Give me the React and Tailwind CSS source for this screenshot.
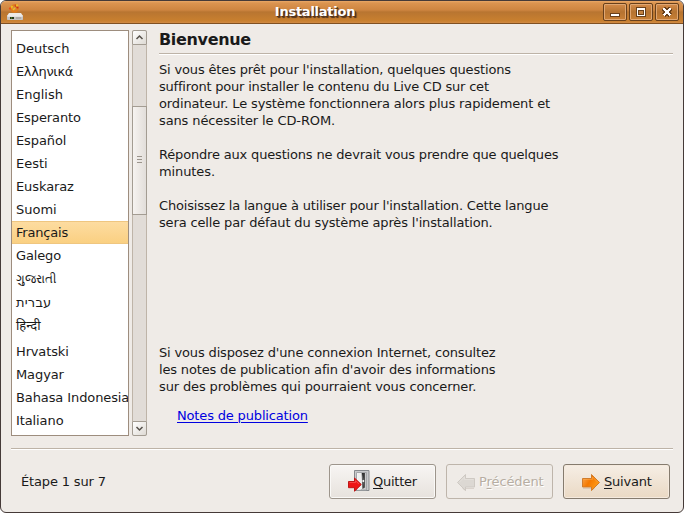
import React from "react";

const languages = [
  { name: "Deutsch" },
  { name: "Ελληνικά", text: "tracking-[-0.35px]" },
  { name: "English" },
  { name: "Esperanto", text: "tracking-[-0.1px]" },
  { name: "Español", text: "tracking-[-0.1px]" },
  { name: "Eesti" },
  { name: "Euskaraz", text: "tracking-[-0.1px]" },
  { name: "Suomi" },
  { name: "Français", selected: true, text: "tracking-[-0.2px]" },
  { name: "Galego", text: "tracking-[-0.15px]" },
  { name: "ગુજરાતી", height: "h-6", text: "text-[12px]" },
  { name: "עברית", text: "tracking-[0.2px]" },
  { name: "हिन्दी", height: "h-[26px]", text: "-translate-y-0.5" },
  { name: "Hrvatski", text: "tracking-[-0.15px]" },
  { name: "Magyar", text: "tracking-[-0.1px]" },
  { name: "Bahasa Indonesia", text: "tracking-[-0.1px]" },
  { name: "Italiano", text: "tracking-[-0.1px]" },
];

const lines = {
  intro: [
    ["Si vous êtes prêt pour l'installation, quelques questions", "tracking-[-0.158px]"],
    ["suffiront pour installer le contenu du Live CD sur cet", "tracking-[-0.2px]"],
    ["ordinateur. Le système fonctionnera alors plus rapidement et", "tracking-[-0.135px]"],
    ["sans nécessiter le CD-ROM.", "tracking-[-0.12px]"],
  ],
  questions: [
    ["Répondre aux questions ne devrait vous prendre que quelques", "tracking-[-0.175px]"],
    ["minutes.", "tracking-[-0.1px]"],
  ],
  language: [
    ["Choisissez la langue à utiliser pour l'installation. Cette langue", "tracking-[-0.185px]"],
    ["sera celle par défaut du système après l'installation.", "tracking-[-0.15px]"],
  ],
  network: [
    ["Si vous disposez d'une connexion Internet, consultez", "tracking-[-0.155px]"],
    ["les notes de publication afin d'avoir des informations", "tracking-[-0.165px]"],
    ["sur des problèmes qui pourraient vous concerner.", "tracking-[-0.13px]"],
  ],
};

function Paragraph({ items, className }) {
  return (
    <p className={className}>
      {items.map(([text, tracking]) => (
        <span key={text} className={`block ${tracking}`}>{text}</span>
      ))}
    </p>
  );
}

function DiskIcon() {
  return (
    <svg width="16" height="19" viewBox="0 0 16 19" className="block">
      <circle cx="7.500" cy="6.500" r="3.200" fill="none" stroke="#e07c1c" strokeWidth="2" />
      <path d="M4.300 7A3.300 3.300 0 0 1 5.500 4" fill="none" stroke="#eec522" strokeWidth="2" />
      <path d="M7.800 3.300a3.300 3.300 0 0 1 2.900 3" fill="none" stroke="#d03010" strokeWidth="1.800" />
      <path d="M6 8l2-2" stroke="#f0c020" strokeWidth="1.500" />
      <circle cx="3.200" cy="6.500" r="1.200" fill="#e8501c" />
      <circle cx="10" cy="3.500" r="1.200" fill="#eebc28" />
      <path d="M2 11h12l2 3H0z" fill="#eceae7" />
      <path d="M0 13.500h16v3.800q0 .7-.7.7H.7Q0 18 0 17.300z" fill="#c5c2bf" />
      <path d="M.5 14h15" stroke="#fff" />
      <path d="M3 15h4v2H3z" fill="#25351b" />
      <path d="M4 16h1" stroke="#60b020" />
      <path d="M9 16h5" stroke="#989592" />
    </svg>
  );
}

function WindowButton({ children }) {
  return (
    <div className="h-[18px] w-6 rounded-[2px] border border-[#69401b] bg-linear-to-b from-[#d58c4a] via-[#b57331] to-[#c98036] shadow-[inset_0_0_0_1px_#e0a772]">
      <svg width="22" height="16" viewBox="0 0 22 16" className="block" shapeRendering="crispEdges">
        {children}
      </svg>
    </div>
  );
}

function QuitIcon() {
  return (
    <svg width="23" height="22" viewBox="0 0 23 22" className="block">
      <defs>
        <linearGradient id="doorway" x1="0" x2="1" y1="0" y2=".3">
          <stop offset="0" stopColor="#111" />
          <stop offset="1" stopColor="#555" />
        </linearGradient>
        <linearGradient id="panel" x1="0" x2="1">
          <stop offset="0" stopColor="#fff" />
          <stop offset="1" stopColor="#c2c3c6" />
        </linearGradient>
      </defs>
      <path d="M7.500 .5h14.500v20h-14.500z" fill="#c9cacc" stroke="#85888c" />
      <path d="M9.500 2.500h10V20h-10z" fill="url(#panel)" stroke="#a5a7aa" />
      <path d="M14.500 3H18v14.500l-3.500 2z" fill="url(#doorway)" />
      <path d="M10.500 3h4l1 16-5 1z" fill="#efefef" />
      <path d="M15 3l2 8-1.500 8z" fill="#707274" />
      <circle cx="16.300" cy="11" r="1" fill="#fff" />
      <path d="M1.500 11.500h6V8L14.300 14.500L7.500 21.200v-3.500h-6z" fill="#ee1616" stroke="#bd1717" strokeLinejoin="round" />
      <path d="M2.500 12.500h6v-1.800l3.500 3.300" fill="none" stroke="#ff6868" opacity=".6" />
    </svg>
  );
}

function ArrowIcon({ back }) {
  const fill = back ? "#dcd8d3" : "url(#orange)";
  return (
    <svg width="20" height="22" viewBox="0 0 20 22" className="block">
      <defs>
        <linearGradient id="orange" x1="0" x2="1" y1="0" y2=".6">
          <stop offset="0" stopColor="#f9aa55" />
          <stop offset=".5" stopColor="#f57900" />
          <stop offset="1" stopColor="#ff9c18" />
        </linearGradient>
      </defs>
      <g transform={back ? "matrix(-1 0 0 1 19 3.500)" : "translate(0 3.500)"}>
        <path d="M1 15h8.500v2l3-2" fill="none" stroke="#786857" opacity=".18" />
        <path d="M.5 5H9.500V1L17.500 9L9.500 17V13.500H.5Z" fill={fill} stroke={back ? "#cec9c3" : "#d07c2c"} strokeLinejoin="round" />
        <path d="M1.500 6H10.500V3.500L15.500 8.500" fill="none" stroke={back ? "#eeeae6" : "#ffb765"} opacity=".4" />
      </g>
    </svg>
  );
}

function ScrollButton({ down }) {
  return (
    <div className={`flex h-[15px] w-[15px] items-center justify-center border border-[#a39c92] bg-linear-to-br from-white to-[#dedad4] ${down ? "rounded-b-[2px]" : "rounded-t-[2px]"}`}>
      <svg width="9" height="7" viewBox="0 0 9 7" className="block">
        <path d={down ? "M1.500 2L4.500 5L7.500 2" : "M1.500 5L4.500 2L7.500 5"} fill="none" stroke="#56514b" strokeWidth="1.500" />
      </svg>
    </div>
  );
}

function Rule() {
  return <div className="h-0.5 border-t border-[#bdb3a7] bg-white" />;
}

export default function App() {
  return (
    <div className="h-[513px] w-[684px] overflow-hidden bg-white font-['DejaVu_Sans','Noto_Sans',sans-serif] text-[13px] leading-[17px] text-[#1a1a1a]">
      <div className="flex h-full flex-col overflow-hidden rounded-t-[6px] rounded-b-[6px] border border-[#453a38] bg-[#efebe7]">
        <header className="flex h-[23px] shrink-0 items-start border-b border-[#805021] bg-[linear-gradient(to_bottom,#e9a867_0,#db9450_2px,#ce8540_9px,#b87531_11px,#c9802f_20px,#d08a45_22px)]">
          <div className="ml-1.5 w-[82px] pt-px"><DiskIcon /></div>
          <h1 className="flex-1 pt-0.5 pr-[62px] text-center text-[13px] font-bold tracking-[-0.25px] text-white [text-shadow:1px_1px_0_#50331c,2px_2px_1px_#50331c]">Installation</h1>
          <div className="mr-1 flex gap-0.5 pt-0.5">
            <WindowButton><path d="M6 9h10v4H6z" fill="#69401b" /><path d="M7 10h8v2H7z" fill="#fff" /></WindowButton>
            <WindowButton><path d="M6 3h10v10H6z" fill="#69401b" /><path d="M7 4h8v8H7z" fill="#fff" /><path d="M8 6h6v5H8z" fill="#69401b" /><path d="M9 7h4v3H9z" fill="#c08040" /></WindowButton>
            <WindowButton><path d="M7.500 4.500l7 7M14.500 4.500l-7 7" stroke="#69401b" strokeWidth="5" /><path d="M7.500 4.500l7 7M14.500 4.500l-7 7" stroke="#fff" strokeWidth="2.800" /></WindowButton>
          </div>
        </header>

        <main className="mx-[10px] mt-1.5 flex h-[406px] shrink-0">
          <ul className="w-[118px] shrink-0 overflow-hidden border border-[#9d8d7e] bg-white pt-1.5">
            {languages.map(({ name, selected, height, text }) => (
              <li key={name} className={`flex items-center overflow-hidden pl-1 whitespace-nowrap ${height || "h-[23px]"} ${selected ? "border-y border-[#efc680] bg-linear-to-b from-[#fddca0] to-[#fad082]" : ""}`}>
                <span className={text}>{name}</span>
              </li>
            ))}
          </ul>
          <div className="ml-[3px] flex w-[15px] shrink-0 flex-col bg-[#e1dcd7]">
            <ScrollButton />
            <div className="h-[61px] border-x border-[#beb4a8]" />
            <div className="flex h-[109px] flex-col items-center justify-center gap-0.5 border border-[#a39c92] bg-linear-to-r from-[#f6f3f0] to-[#e2deda] pb-0.5">
              <div className="h-px w-[5px] bg-[#9b948c]" />
              <div className="h-px w-[5px] bg-[#9b948c]" />
              <div className="h-px w-[5px] bg-[#9b948c]" />
            </div>
            <div className="flex-1 border-x border-[#beb4a8]" />
            <ScrollButton down />
          </div>
          <section className="ml-3 min-w-0 flex-1 whitespace-nowrap">
            <h2 className="mb-1 h-[19px] pt-px text-[16px] leading-[18px] font-bold tracking-[-0.33px]">Bienvenue</h2>
            <Rule />
            <Paragraph className="mt-1.5" items={lines.intro} />
            <Paragraph className="mt-[17px]" items={lines.questions} />
            <Paragraph className="mt-[17px]" items={lines.language} />
            <Paragraph className="mt-[113px]" items={lines.network} />
            <a className="mt-3 ml-[18px] inline-block tracking-[-0.16px] text-[#0000e0] underline underline-offset-2">Notes de publication</a>
          </section>
        </main>

        <div className="mx-[10px] mt-3"><Rule /></div>
        <footer className="mr-3 ml-5 flex pt-[14px]">
          <div className="w-[308px] pt-[9px] tracking-[-0.15px]">Étape 1 sur 7</div>
          <button className="mr-[10px] flex h-[35px] w-[107px] rounded-[3px] border border-[#9d958c] bg-linear-to-b from-[#f7f5f3] to-[#e7e2dd] pt-[5px] pl-[17px] shadow-[inset_0_0_0_1px_#faf9f7]">
            <QuitIcon /><span className="ml-[3px] pt-[3px] tracking-[-0.25px]"><u className="underline-offset-2">Q</u>uitter</span>
          </button>
          <button className="mr-[10px] flex h-[35px] w-[107px] rounded-[3px] border border-[#beb5ab] pt-[5px] pl-[9px] text-[#b7aea3] [text-shadow:1px_1px_0_white]">
            <ArrowIcon back />
            <span className="ml-[3px] pt-[3px] tracking-[-0.1px]">P<u className="underline-offset-2">r</u>écédent</span>
          </button>
          <button className="flex h-[35px] w-[107px] rounded-[3px] border border-[#857b6e] bg-linear-to-b from-[#f6eee5] to-[#ead9c4] pt-[5px] pl-[18px] shadow-[inset_0_0_0_1px_#f5eade]">
            <ArrowIcon />
            <span className="ml-0.5 pt-[3px] tracking-[-0.2px]"><u className="underline-offset-2">S</u>uivant</span>
          </button>
        </footer>
      </div>
    </div>
  );
}
